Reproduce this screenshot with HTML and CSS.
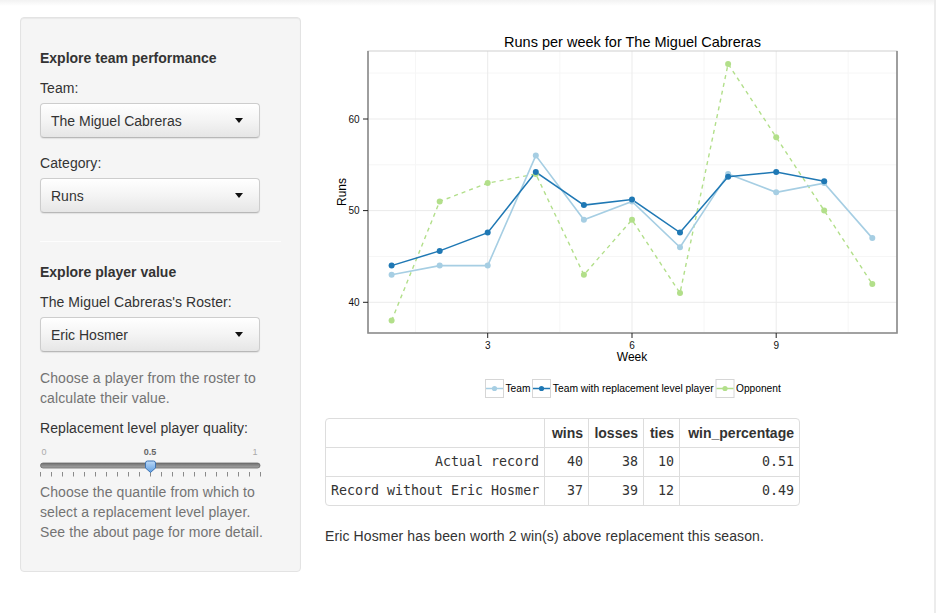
FILE: index.html
```html
<!DOCTYPE html>
<html lang="en">
<head>
<meta charset="utf-8">
<title>Team performance</title>
<link rel="stylesheet" href="styles.css">
</head>
<body>
<div class="page">
  <aside class="well">
    <h4 class="hd">Explore team performance</h4>
    <label class="lbl">Team:</label>
    <div class="select gap"><span>The Miguel Cabreras</span><span class="caret"></span></div>
    <label class="lbl">Category:</label>
    <div class="select"><span>Runs</span><span class="caret"></span></div>
    <hr class="sep">
    <h4 class="hd hd2">Explore player value</h4>
    <label class="lbl">The Miguel Cabreras's Roster:</label>
    <div class="select gap2"><span>Eric Hosmer</span><span class="caret"></span></div>
    <p class="help">Choose a player from the roster to calculate their value.</p>
    <label class="lbl lbl-flat">Replacement level player quality:</label>
    <svg class="slider" width="222" height="44" viewBox="0 0 222 44">
      <defs>
        <linearGradient id="bar" x1="0" y1="0" x2="0" y2="1">
          <stop offset="0" stop-color="#6f6f6f"/>
          <stop offset="1" stop-color="#a8a8a8"/>
        </linearGradient>
        <linearGradient id="knob" x1="0" y1="0" x2="0" y2="1">
          <stop offset="0" stop-color="#bcd9f7"/>
          <stop offset="1" stop-color="#5f9ee2"/>
        </linearGradient>
      </defs>
      <text x="4" y="17" class="sl-end" text-anchor="middle">0</text>
      <text x="110" y="17" class="sl-mid" text-anchor="middle">0.5</text>
      <text x="215" y="17" class="sl-end" text-anchor="middle">1</text>
      <rect x="0.5" y="25" width="219.5" height="5" rx="2.5" fill="url(#bar)" stroke="#6a6a6a" stroke-width="0.8"/>
      <g stroke="#8a8a8a" stroke-width="1">
        <line x1="0.5" y1="34" x2="0.5" y2="38.5"/><line x1="11.5" y1="34" x2="11.5" y2="38.5"/>
        <line x1="22.5" y1="34" x2="22.5" y2="38.5"/><line x1="33.5" y1="34" x2="33.5" y2="38.5"/>
        <line x1="44.5" y1="34" x2="44.5" y2="38.5"/><line x1="55.5" y1="34" x2="55.5" y2="38.5"/>
        <line x1="66.5" y1="34" x2="66.5" y2="38.5"/><line x1="77.5" y1="34" x2="77.5" y2="38.5"/>
        <line x1="88.5" y1="34" x2="88.5" y2="38.5"/><line x1="99.5" y1="34" x2="99.5" y2="38.5"/>
        <line x1="110.5" y1="34" x2="110.5" y2="38.5"/><line x1="121.5" y1="34" x2="121.5" y2="38.5"/>
        <line x1="132.5" y1="34" x2="132.5" y2="38.5"/><line x1="143.5" y1="34" x2="143.5" y2="38.5"/>
        <line x1="154.5" y1="34" x2="154.5" y2="38.5"/><line x1="165.5" y1="34" x2="165.5" y2="38.5"/>
        <line x1="176.5" y1="34" x2="176.5" y2="38.5"/><line x1="187.5" y1="34" x2="187.5" y2="38.5"/>
        <line x1="198.5" y1="34" x2="198.5" y2="38.5"/><line x1="209.5" y1="34" x2="209.5" y2="38.5"/>
        <line x1="220.5" y1="34" x2="220.5" y2="38.5"/>
      </g>
      <path d="M105.5 25 q0 -2 2 -2 h6 q2 0 2 2 v5 l-5 4.5 l-5 -4.5 z" fill="url(#knob)" stroke="#3f74b3" stroke-width="1"/>
    </svg>
    <p class="help help-last">Choose the quantile from which to select a replacement level player. See the about page for more detail.</p>
  </aside>

  <main class="main">
    <svg class="chart" width="585" height="390" viewBox="325 20 585 390">
      <text x="632.5" y="47" class="title" text-anchor="middle">Runs per week for The Miguel Cabreras</text>
      <rect x="368" y="51" width="529" height="282" fill="#fff"/>
      <g stroke="#f6f6f6" stroke-width="1">
        <line x1="368" y1="73.1" x2="897" y2="73.1"/>
        <line x1="368" y1="164.8" x2="897" y2="164.8"/>
        <line x1="368" y1="256.5" x2="897" y2="256.5"/>
        <line x1="415.6" y1="51" x2="415.6" y2="333"/>
        <line x1="559.9" y1="51" x2="559.9" y2="333"/>
        <line x1="704.1" y1="51" x2="704.1" y2="333"/>
        <line x1="848.2" y1="51" x2="848.2" y2="333"/>
      </g>
      <g stroke="#ebebeb" stroke-width="1">
        <line x1="368" y1="119" x2="897" y2="119"/>
        <line x1="368" y1="210.6" x2="897" y2="210.6"/>
        <line x1="368" y1="302.3" x2="897" y2="302.3"/>
        <line x1="487.7" y1="51" x2="487.7" y2="333"/>
        <line x1="632" y1="51" x2="632" y2="333"/>
        <line x1="776.2" y1="51" x2="776.2" y2="333"/>
      </g>
      <polyline fill="none" stroke="#b2df8a" stroke-width="1.4" stroke-dasharray="4 4"
        points="391.6,320.6 439.7,201.4 487.7,183.1 535.8,174 583.9,274.8 632,219.8 680,293.1 728.1,63.9 776.2,137.2 824.2,210.6 872.3,284"/>
      <polyline fill="none" stroke="#a6cee3" stroke-width="1.6"
        points="391.6,274.8 439.7,265.6 487.7,265.6 535.8,155.6 583.9,219.8 632,201.4 680,247.3 728.1,173.9 776.2,192.3 824.2,183.1 872.3,238.1"/>
      <polyline fill="none" stroke="#1f78b4" stroke-width="1.5"
        points="391.6,265.6 439.7,250.9 487.7,232.6 535.8,172.1 583.9,205.1 632,199.6 680,232.6 728.1,176.7 776.2,172.1 824.2,181.3"/>
      <g fill="#b2df8a">
        <circle cx="391.6" cy="320.6" r="3"/><circle cx="439.7" cy="201.4" r="3"/><circle cx="487.7" cy="183.1" r="3"/>
        <circle cx="535.8" cy="174" r="3"/><circle cx="583.9" cy="274.8" r="3"/><circle cx="632" cy="219.8" r="3"/>
        <circle cx="680" cy="293.1" r="3"/><circle cx="728.1" cy="63.9" r="3"/><circle cx="776.2" cy="137.2" r="3"/>
        <circle cx="824.2" cy="210.6" r="3"/><circle cx="872.3" cy="284" r="3"/>
      </g>
      <g fill="#a6cee3">
        <circle cx="391.6" cy="274.8" r="3"/><circle cx="439.7" cy="265.6" r="3"/><circle cx="487.7" cy="265.6" r="3"/>
        <circle cx="535.8" cy="155.6" r="3"/><circle cx="583.9" cy="219.8" r="3"/><circle cx="632" cy="201.4" r="3"/>
        <circle cx="680" cy="247.3" r="3"/><circle cx="728.1" cy="173.9" r="3"/><circle cx="776.2" cy="192.3" r="3"/>
        <circle cx="824.2" cy="183.1" r="3"/><circle cx="872.3" cy="238.1" r="3"/>
      </g>
      <g fill="#1f78b4">
        <circle cx="391.6" cy="265.6" r="3"/><circle cx="439.7" cy="250.9" r="3"/><circle cx="487.7" cy="232.6" r="3"/>
        <circle cx="535.8" cy="172.1" r="3"/><circle cx="583.9" cy="205.1" r="3"/><circle cx="632" cy="199.6" r="3"/>
        <circle cx="680" cy="232.6" r="3"/><circle cx="728.1" cy="176.7" r="3"/><circle cx="776.2" cy="172.1" r="3"/>
        <circle cx="824.2" cy="181.3" r="3"/>
      </g>
      <rect x="368" y="51" width="529" height="282" fill="none" stroke="#cfcfcf" stroke-width="1"/>
      <g stroke="#8c8c8c" stroke-width="1.6" fill="none">
        <polyline points="368,51 368,333 897,333 897,51"/>
      </g>
      <g stroke="#222" stroke-width="1">
        <line x1="363" y1="119" x2="368" y2="119"/>
        <line x1="363" y1="210.6" x2="368" y2="210.6"/>
        <line x1="363" y1="302.3" x2="368" y2="302.3"/>
        <line x1="487.7" y1="333" x2="487.7" y2="338"/>
        <line x1="632" y1="333" x2="632" y2="338"/>
        <line x1="776.2" y1="333" x2="776.2" y2="338"/>
      </g>
      <g class="tick">
        <text x="359.5" y="122.8" text-anchor="end">60</text>
        <text x="359.5" y="214.3" text-anchor="end">50</text>
        <text x="359.5" y="306" text-anchor="end">40</text>
        <text x="487.7" y="349" text-anchor="middle">3</text>
        <text x="632" y="349" text-anchor="middle">6</text>
        <text x="776.2" y="349" text-anchor="middle">9</text>
      </g>
      <text x="632" y="361" class="axis" text-anchor="middle">Week</text>
      <text class="axis" text-anchor="middle" transform="translate(345.5 192) rotate(-90)">Runs</text>

      <g class="legend">
        <rect x="485.5" y="379.5" width="18" height="18" fill="#fff" stroke="#d6d6d6"/>
        <line x1="486" y1="388.5" x2="503" y2="388.5" stroke="#a6cee3" stroke-width="1.5"/>
        <circle cx="494.5" cy="388.5" r="2.6" fill="#a6cee3"/>
        <text x="505.5" y="392">Team</text>
        <rect x="532.5" y="379.5" width="18" height="18" fill="#fff" stroke="#d6d6d6"/>
        <line x1="533" y1="388.5" x2="550" y2="388.5" stroke="#1f78b4" stroke-width="1.5"/>
        <circle cx="541.5" cy="388.5" r="2.6" fill="#1f78b4"/>
        <text x="552.8" y="392" class="wide">Team with replacement level player</text>
        <rect x="716" y="379.5" width="18" height="18" fill="#fff" stroke="#d6d6d6"/>
        <line x1="716.5" y1="388.5" x2="733.5" y2="388.5" stroke="#b2df8a" stroke-width="1.5"/>
        <circle cx="725" cy="388.5" r="2.6" fill="#b2df8a"/>
        <text x="736" y="392">Opponent</text>
      </g>
    </svg>

    <div class="tbl-wrap">
      <table class="tbl">
        <thead>
          <tr>
            <th class="c1"></th>
            <th class="c2">wins</th>
            <th class="c3">losses</th>
            <th class="c4">ties</th>
            <th class="c5">win_percentage</th>
          </tr>
        </thead>
        <tbody>
          <tr>
            <td>Actual record</td><td>40</td><td>38</td><td>10</td><td>0.51</td>
          </tr>
          <tr>
            <td>Record without Eric Hosmer</td><td>37</td><td>39</td><td>12</td><td>0.49</td>
          </tr>
        </tbody>
      </table>
    </div>
    <p class="summary">Eric Hosmer has been worth 2 win(s) above replacement this season.</p>
  </main>
</div>
</body>
</html>
```

FILE: styles.css
```css
html {
  background:
    linear-gradient(to left, #ececec 2px, transparent 2px),
    linear-gradient(to bottom, #f2f2f2 0, #ffffff 6px);
  background-color: #fff;
  min-height: 100%;
}

body {
  margin: 0;
  font-family: "Liberation Sans", Arial, sans-serif;
  font-size: 14px;
  line-height: 20px;
  color: #333;
}

.page {
  display: flex;
  align-items: flex-start;
  gap: 24px;
  padding: 17px 0 0 20px;
}

.well {
  width: 281px;
  box-sizing: border-box;
  background: #f5f5f5;
  border: 1px solid #e3e3e3;
  border-radius: 4px;
  box-shadow: inset 0 1px 1px rgba(0, 0, 0, 0.05);
  padding: 19px 19px 29px;
  flex: none;
}

.hd {
  margin: 11px 0 10px;
  font-size: 14px;
  line-height: 20px;
  font-weight: bold;
}

.hd2 {
  margin-top: 0;
}

.lbl {
  display: block;
  margin-bottom: 5px;
  font-weight: normal;
  letter-spacing: 0.08px;
}

.lbl-flat {
  margin-bottom: 0;
}

.select {
  width: 220px;
  height: 35px;
  box-sizing: border-box;
  display: flex;
  align-items: center;
  justify-content: space-between;
  padding: 0 16px 0 10px;
  border: 1px solid #cdcdcd;
  border-bottom-color: #b8b8b8;
  border-radius: 4px;
  background: linear-gradient(to bottom, #ffffff 0%, #f4f4f4 50%, #e6e6e6 100%);
  box-shadow: 0 1px 1px rgba(0, 0, 0, 0.08), inset 0 1px 0 #fff;
  color: #333;
}

.gap {
  margin-bottom: 15px;
}

.gap2 {
  margin-bottom: 16px;
}

.caret {
  width: 0;
  height: 0;
  border-left: 4.5px solid transparent;
  border-right: 4.5px solid transparent;
  border-top: 5px solid #111;
}

.sep {
  margin: 28px 0 20px;
  border: 0;
  border-top: 1px solid #fdfdfd;
  height: 0;
}

.help {
  margin: 0 0 10px;
  color: #737373;
  max-width: 232px;
  letter-spacing: 0.1px;
}

.help-last {
  margin: 0;
}

.slider {
  display: block;
  overflow: visible;
}

.sl-end {
  font-family: "Liberation Sans", Arial, sans-serif;
  font-size: 9px;
  fill: #aaa;
}

.sl-mid {
  font-family: "Liberation Sans", Arial, sans-serif;
  font-size: 9px;
  font-weight: bold;
  fill: #666;
}

.main {
  padding-top: 3px;
  flex: none;
  width: 585px;
}

.chart {
  display: block;
  font-family: "Liberation Sans", Arial, sans-serif;
}

.title {
  font-size: 14.5px;
  fill: #000;
}

.tick text {
  font-size: 10px;
  fill: #111;
}

.axis {
  font-size: 12px;
  fill: #000;
}

.legend text {
  font-size: 10.2px;
  fill: #000;
}

.legend .wide {
  font-size: 10.3px;
}

.tbl-wrap {
  margin-top: 8px;
  width: 475px;
  border: 1px solid #ddd;
  border-radius: 4px;
  overflow: hidden;
  box-sizing: border-box;
}

.tbl {
  width: 473px;
  border-collapse: collapse;
  table-layout: fixed;
}

.tbl th,
.tbl td {
  padding: 4px 5px;
  line-height: 20px;
  text-align: right;
  border-left: 1px solid #ddd;
  white-space: nowrap;
}

.tbl th:first-child,
.tbl td:first-child {
  border-left: 0;
}

.tbl tbody td {
  border-top: 1px solid #ddd;
  font-family: "DejaVu Sans Mono", "Liberation Mono", monospace;
  font-size: 13.3px;
}

.tbl th {
  font-weight: bold;
}

.c1 { width: 208px; }
.c2 { width: 33px; }
.c3 { width: 44px; }
.c4 { width: 25px; }
.c5 { width: 109px; }

.summary {
  margin: 20px 0 0;
  letter-spacing: 0.12px;
}
```
